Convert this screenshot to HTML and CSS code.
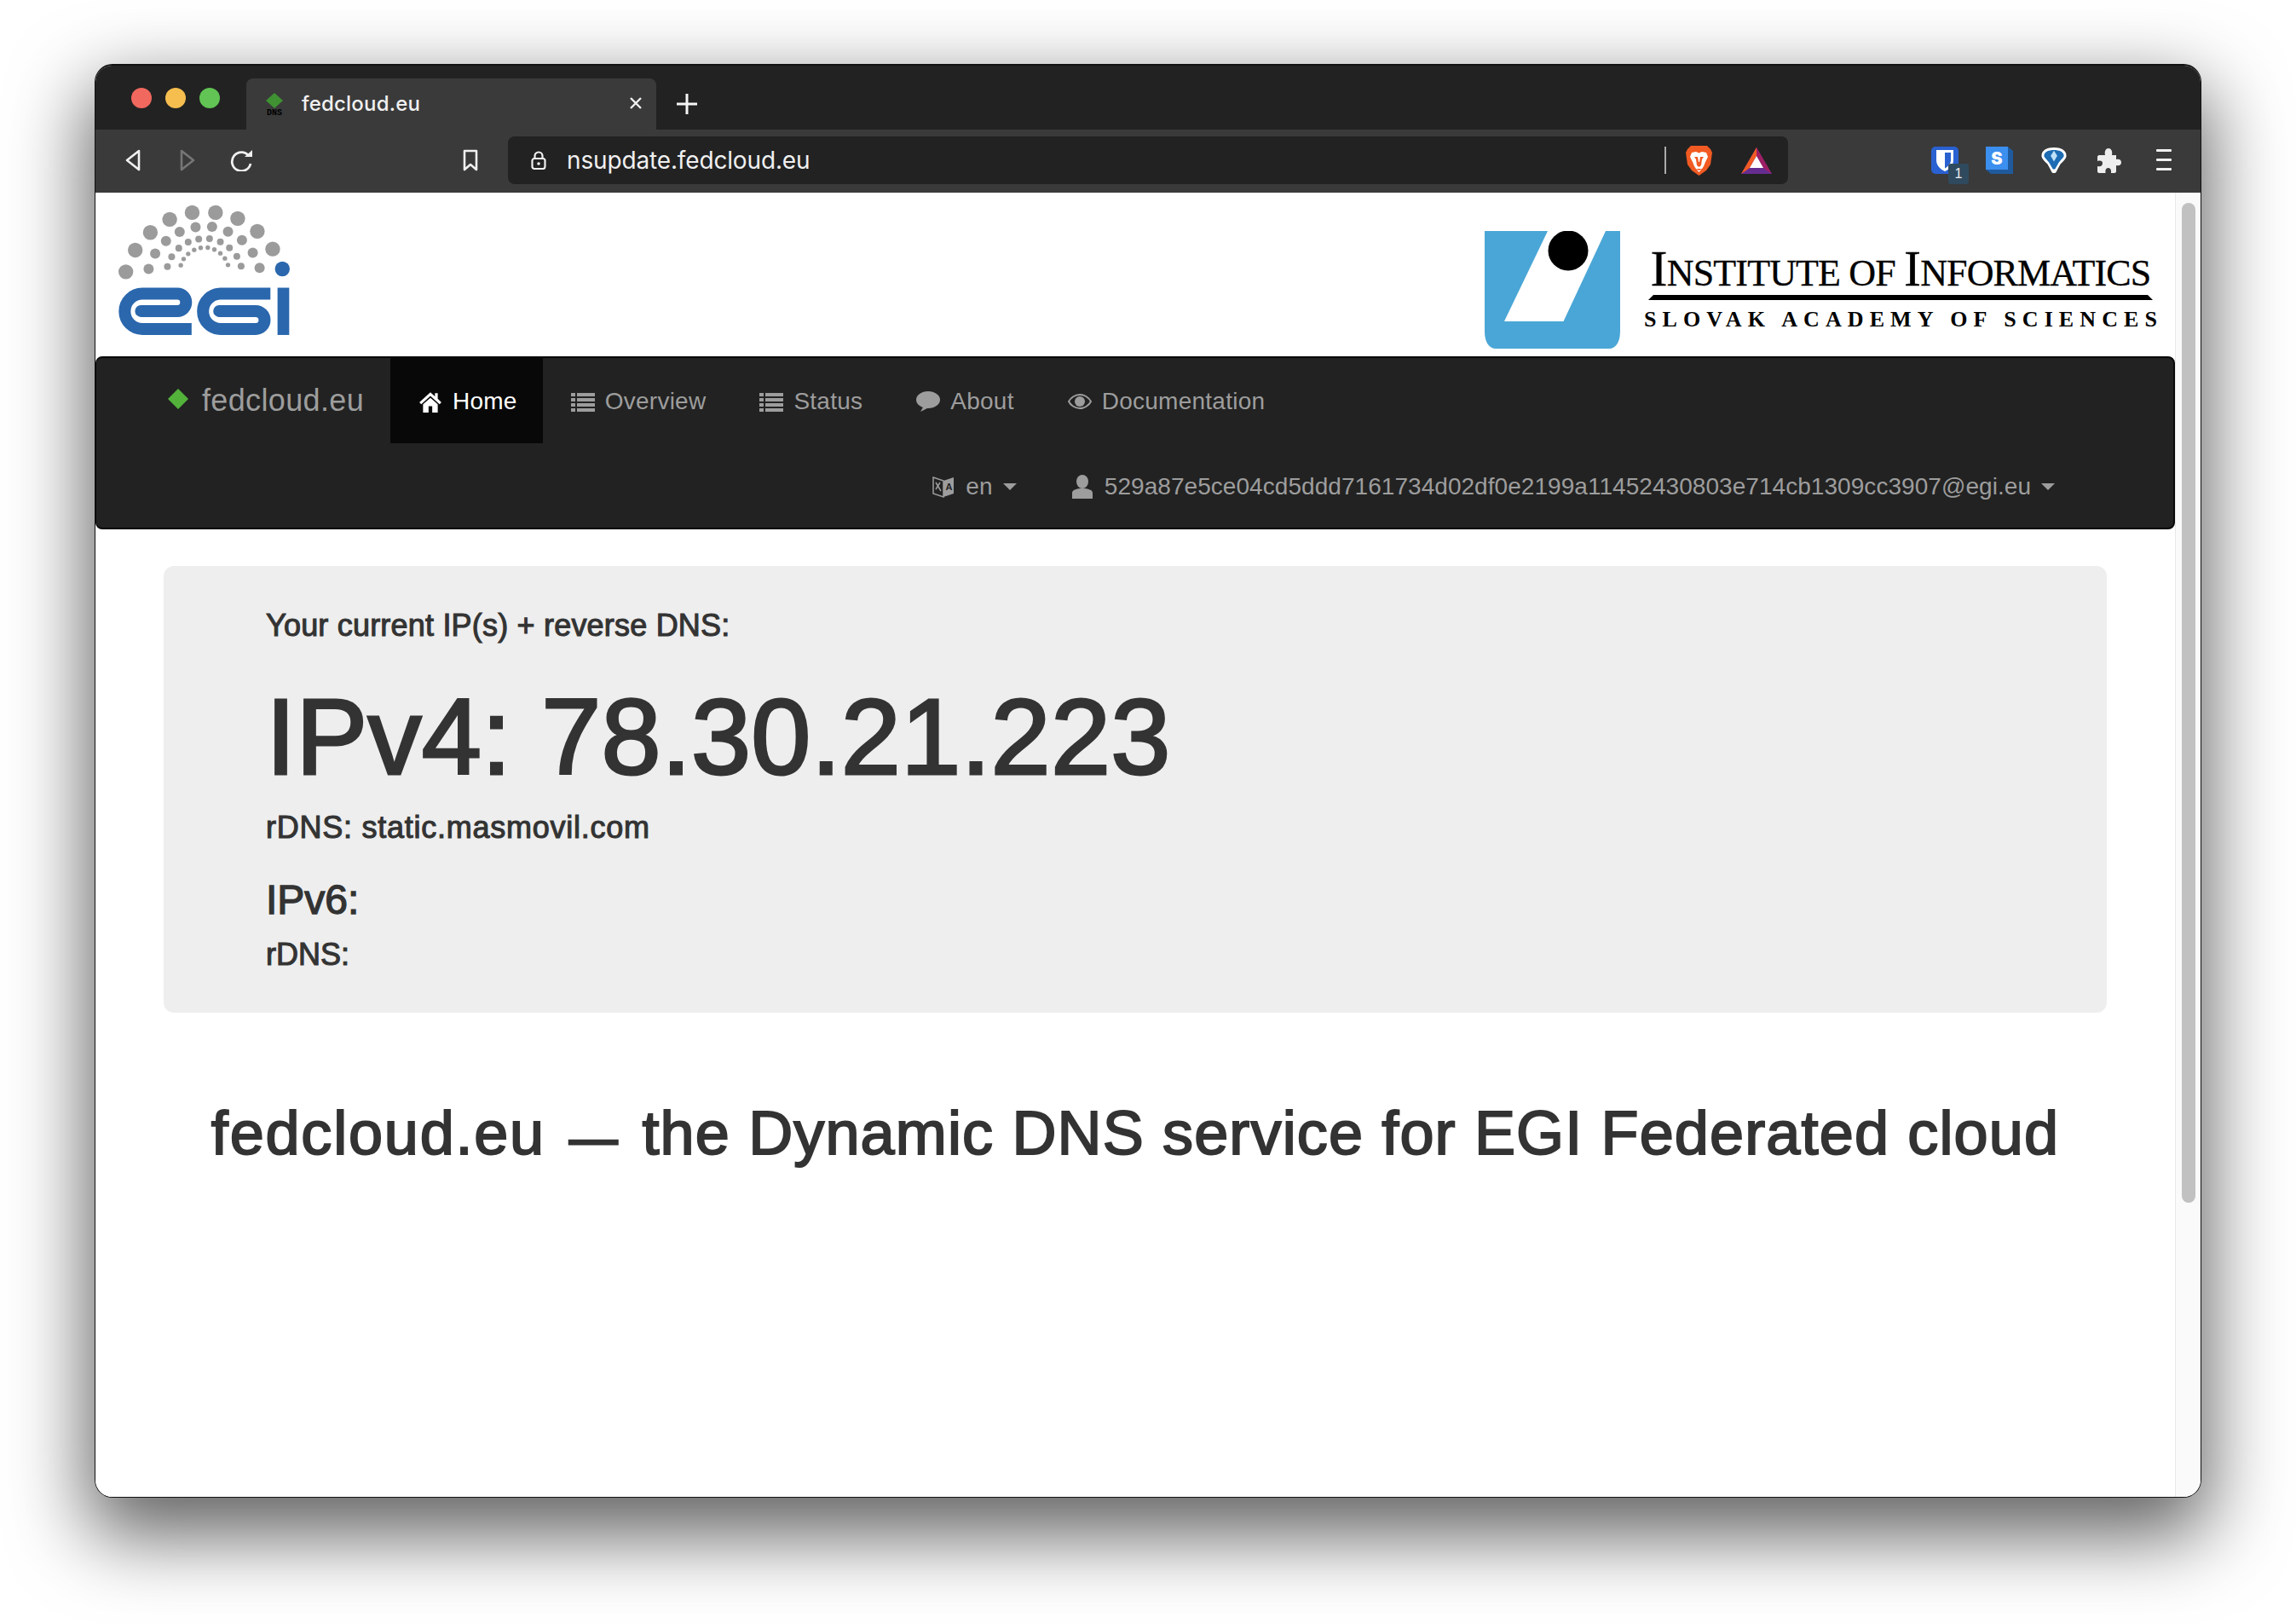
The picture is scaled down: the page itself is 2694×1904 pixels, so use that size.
FILE: index.html
```html
<!DOCTYPE html>
<html lang="en">
<head>
<meta charset="utf-8">
<title>fedcloud.eu</title>
<link rel="stylesheet" href="styles.css">
</head>
<body>
<div class="window">
  <div class="tabstrip">
    <div class="dots"><span class="dot red"></span><span class="dot yellow"></span><span class="dot green"></span></div>
    <div class="tab">
      <div class="favicon">
        <svg class="fav-diamond" viewBox="0 0 20 18"><path d="M10 0 20 9 10 18 0 9Z" fill="#3f9132"/></svg>
        <span class="fav-text">DNS</span>
      </div>
      <span class="tab-title">fedcloud.eu</span>
      <svg class="tab-close" viewBox="0 0 14 14"><path d="M1 1 13 13M13 1 1 13" stroke="#f0f0f0" stroke-width="2.4" fill="none"/></svg>
    </div>
    <svg class="new-tab" viewBox="0 0 24 24"><path d="M12 0V24M0 12H24" stroke="#f5f5f5" stroke-width="3" fill="none"/></svg>
  </div>
  <div class="toolbar">
    <svg class="tb-icon back" viewBox="0 0 20 26"><path d="M17 2 3 13 17 24Z" fill="none" stroke="#f0f0f0" stroke-width="2.6" stroke-linejoin="round"/></svg>
    <svg class="tb-icon forward" viewBox="0 0 20 26"><path d="M3 2 17 13 3 24Z" fill="none" stroke="#767676" stroke-width="2.6" stroke-linejoin="round"/></svg>
    <svg class="tb-icon reload" viewBox="0 0 28 26"><path d="M22 8A11 11 0 1 0 24 17" fill="none" stroke="#f0f0f0" stroke-width="2.8"/><path d="M17 9H26V1Z" fill="#f0f0f0"/></svg>
    <svg class="tb-icon bookmark" viewBox="0 0 20 26"><path d="M3 2H17V24L10 18 3 24Z" fill="none" stroke="#f0f0f0" stroke-width="2.6" stroke-linejoin="round"/></svg>
    <div class="omnibox">
      <svg class="lock" viewBox="0 0 18 22"><path d="M4.500 9V6A4.500 4.500 0 0 1 13.500 6V9" fill="none" stroke="#f0f0f0" stroke-width="2.200"/><rect x="1.500" y="9" width="15" height="12" rx="2.500" fill="none" stroke="#f0f0f0" stroke-width="2.200"/><circle cx="9" cy="15" r="1.800" fill="#f0f0f0"/></svg>
      <span class="url">nsupdate.fedcloud.eu</span>
      <span class="omni-sep"></span>
      <svg class="lion" viewBox="0 0 31 36"><path d="M6 1H25L29 5 31 9 29 23 24 30 15.500 36 7 30 2 23 0 9 2 5Z" fill="#f15a22"/><path d="M7 9 12 8 15.500 9.500 19 8 24 9 26 14 23 20 21 25 19 28H12L10 25 8 20 5 14Z" fill="#fff"/><path d="M10 14H14L15 20H16L17 14H21L19 17 18 24 15.500 26 13 24 12 17Z" fill="#f15a22"/><path d="M12 28 15.500 30 19 28 15.500 32Z" fill="#fff"/></svg>
      <svg class="bat" viewBox="0 0 36 31"><path d="M18 0 36 31H0Z" fill="#662d91"/><path d="M18 0 36 31 26 24 18 10Z" fill="#9e1f63"/><path d="M18 0V10L10 24 0 31Z" fill="#f15a22"/><path d="M18 10 26 24H10Z" fill="#fff"/></svg>
    </div>
    <div class="ext bitwarden">
      <svg viewBox="0 0 32 32"><rect width="32" height="32" rx="5" fill="#2a61d1"/><path d="M6 4H26V16C26 22 21 27 16 29 11 27 6 22 6 16Z" fill="#fff"/><path d="M16 7H23V16C23 20 19 24 16 25.500Z" fill="#2a61d1"/></svg>
      <span class="ext-badge">1</span>
    </div>
    <svg class="ext ext-s" viewBox="0 0 32 32"><path d="M0 0H26L32 5V32H6L0 27Z" fill="#1f5a9c"/><rect width="26" height="27" fill="#3b8fef"/><text x="13" y="21" class="s-letter">S</text></svg>
    <svg class="ext" viewBox="0 0 32 33"><path d="M16 1C8 1 1 4 1 11 1 14 4 17 8 21L12 28C13 31 14 32 16 32 18 32 19 31 20 28L24 21C28 17 31 14 31 11 31 4 24 1 16 1Z" fill="#fff"/><path d="M16 4C10 4 4 6 4 11 4 13 7 15 10 19L14 26C15 28 17 28 18 26L22 19C25 15 28 13 28 11 28 6 22 4 16 4Z" fill="#1e6cb4"/><path d="M16 5 12 11 16 18 20 11Z" fill="#bfe1f7"/></svg>
    <svg class="ext puzzle" viewBox="0 0 28 29"><path d="M2 8H9C8 3 10 0 13 0 16 0 18 3 17 8H22V13C26 12 28 14 28 16.500 28 19 26 21 22 20V27C22 28 21 29 20 29H16C16.500 25 15 23 12.500 23 10 23 9 25 9.500 29H2C1 29 0 28 0 27V21C4 22 6 20 6 17.500 6 15 4 14 0 15V10C0 9 1 8 2 8Z" fill="#eee"/></svg>
    <div class="hamburger"><i></i><i></i><i></i></div>
  </div>
  <div class="viewport">
    <div class="page">
      <header class="logos">
        <svg class="egi" viewBox="80 40 620 470">
          <g fill="#9b9b9b">
            <circle cx="112" cy="282" r="26"/><circle cx="145" cy="206" r="26"/><circle cx="198" cy="144" r="26"/><circle cx="266" cy="98" r="26"/><circle cx="345" cy="74" r="26"/><circle cx="427" cy="74" r="26"/><circle cx="505" cy="95" r="26"/><circle cx="574" cy="140" r="26"/><circle cx="628" cy="202" r="26"/>
            <circle cx="192" cy="272" r="18"/><circle cx="215" cy="218" r="18"/><circle cx="253" cy="174" r="18"/><circle cx="301" cy="142" r="18"/><circle cx="357" cy="125" r="18"/><circle cx="415" cy="124" r="18"/><circle cx="471" cy="141" r="18"/><circle cx="520" cy="171" r="18"/><circle cx="558" cy="215" r="18"/><circle cx="582" cy="268" r="18"/>
            <circle cx="258" cy="264" r="12"/><circle cx="273" cy="229" r="12"/><circle cx="298" cy="199" r="12"/><circle cx="331" cy="178" r="12"/><circle cx="368" cy="167" r="12"/><circle cx="406" cy="166" r="12"/><circle cx="444" cy="177" r="12"/><circle cx="476" cy="198" r="12"/><circle cx="502" cy="228" r="12"/><circle cx="517" cy="262" r="12"/>
            <circle cx="305" cy="259" r="8"/><circle cx="315" cy="237" r="8"/><circle cx="331" cy="219" r="8"/><circle cx="352" cy="205" r="8"/><circle cx="375" cy="198" r="8"/><circle cx="400" cy="197" r="8"/><circle cx="423" cy="204" r="8"/><circle cx="444" cy="217" r="8"/><circle cx="460" cy="235" r="8"/><circle cx="471" cy="258" r="8"/>
          </g>
          <circle cx="662" cy="272" r="26" fill="#2a67ad"/>
          <g fill="none" stroke="#2a67ad" stroke-width="42">
            <path d="M343 483H170A62 62 0 0 1 170 359H293A30.500 30.500 0 0 1 293 420H165"/>
            <path d="M620 359H445A62 62 0 0 0 445 483H568A30.500 30.500 0 0 0 568 420H440"/>
          </g>
          <circle cx="165" cy="420" r="21" fill="#2a67ad"/>
          <circle cx="440" cy="420" r="21" fill="#2a67ad"/>
          <rect x="645" y="338" width="41" height="166" fill="#2a67ad"/>
        </svg>
        <div class="ii">
          <svg class="ii-mark" viewBox="0 0 159 138"><path d="M0 0H159V118C159 130 154 138 146 138H13C5 138 0 130 0 118Z" fill="#4aa6d6"/><path d="M74 0H142L92.500 106H23Z" fill="#fff"/><circle cx="98" cy="23" r="23.500" fill="#000"/></svg>
          <div class="ii-text">
            <div class="ii-name"><span class="ii-big">I</span>NSTITUTE OF <span class="ii-big">I</span>NFORMATICS</div>
            <div class="ii-rule"></div>
            <div class="ii-sub">SLOVAK ACADEMY OF SCIENCES</div>
          </div>
        </div>
      </header>
      <nav class="navbar">
        <div class="nav-row">
          <a class="brand"><svg class="brand-icon" viewBox="0 0 24 24"><path d="M12 0 24 12 12 24 0 12Z" fill="#52b23a"/></svg>fedcloud.eu</a>
          <a class="nav-item active"><svg class="gi" viewBox="0 0 26 26"><path d="M13 3 1 14 3 16 13 7 23 16 25 14 21 10V4H18V7.500Z" fill="currentColor"/><path d="M13 9 5 16V25H11V18H15V25H21V16Z" fill="currentColor"/></svg>Home</a>
          <a class="nav-item"><svg class="gi" viewBox="0 0 28 24"><path d="M0 2H5V6H0ZM7 2H28V6H7ZM0 8H5V12H0ZM7 8H28V12H7ZM0 14H5V18H0ZM7 14H28V18H7ZM0 20H5V24H0ZM7 20H28V24H7Z" fill="currentColor"/></svg>Overview</a>
          <a class="nav-item"><svg class="gi" viewBox="0 0 28 24"><path d="M0 2H5V6H0ZM7 2H28V6H7ZM0 8H5V12H0ZM7 8H28V12H7ZM0 14H5V18H0ZM7 14H28V18H7ZM0 20H5V24H0ZM7 20H28V24H7Z" fill="currentColor"/></svg>Status</a>
          <a class="nav-item"><svg class="gi" viewBox="0 0 28 24"><ellipse cx="14" cy="10" rx="14" ry="10" fill="currentColor"/><path d="M9 17 5 24 15 19Z" fill="currentColor"/></svg>About</a>
          <a class="nav-item"><svg class="gi" viewBox="0 0 28 24"><path d="M14 4C8 4 3 8 1 12 3 16 8 20 14 20 20 20 25 16 27 12 25 8 20 4 14 4Z" fill="none" stroke="currentColor" stroke-width="2"/><circle cx="14" cy="12" r="6" fill="currentColor"/></svg>Documentation</a>
        </div>
        <div class="nav-row nav-right">
          <a class="nav-item"><svg class="gi lang" viewBox="0 0 26 28"><path d="M1 3 13 7V26L1 22Z" fill="none" stroke="currentColor" stroke-width="1.500"/><path d="M13 7 25 3V22L13 26Z" fill="currentColor"/><path d="M4 9 10 19M9 9 4 17" stroke="currentColor" stroke-width="1.500" fill="none"/><text x="15.500" y="18" class="lang-a">A</text></svg>en<span class="caret"></span></a>
          <a class="nav-item nav-user"><svg class="gi" viewBox="0 0 24 28"><ellipse cx="12" cy="8" rx="7" ry="8" fill="currentColor"/><path d="M0 28V21C0 18 5 16 12 16 19 16 24 18 24 21V28Z" fill="currentColor"/></svg>529a87e5ce04cd5ddd7161734d02df0e2199a11452430803e714cb1309cc3907@egi.eu<span class="caret"></span></a>
        </div>
      </nav>
      <main class="content">
        <section class="jumbotron">
          <h4 class="jt-label">Your current IP(s) + reverse DNS:</h4>
          <h1 class="jt-ip">IPv4: 78.30.21.223</h1>
          <h4 class="jt-rdns">rDNS: static.masmovil.com</h4>
          <h3 class="jt-ip6">IPv6:</h3>
          <h4 class="jt-rdns6">rDNS:</h4>
        </section>
        <h1 class="tagline"><span class="tg-brand">fedcloud.eu</span> <span class="dash">—</span> the Dynamic DNS service for EGI Federated cloud</h1>
      </main>
    </div>
    <div class="scrollbar"><div class="thumb"></div></div>
  </div>
</div>
</body>
</html>
```
FILE: styles.css
```css
* { box-sizing: border-box; }
html, body { margin: 0; height: 100%; }
body {
  background: #fff;
  padding: 75px 111px 147px;
  font-family: "Liberation Sans", Arial, sans-serif;
  color: #333;
  overflow: hidden;
}
.window {
  width: 2472px;
  height: 1682px;
  display: flex;
  flex-direction: column;
  border: 1px solid #111;
  border-top: 2px solid #111;
  border-radius: 21px;
  overflow: hidden;
  background: #fff;
  box-shadow: 0 36px 90px 8px rgba(0, 0, 0, .62);
}
.tabstrip {
  height: 75px;
  flex: none;
  background: #222;
  display: flex;
  align-items: flex-start;
}
.dots { display: flex; gap: 16px; padding: 26px 0 0 42px; width: 177px; }
.dot { width: 24px; height: 24px; border-radius: 50%; }
.red { background: #f1685e; }
.yellow { background: #f6be4f; }
.green { background: #61c454; }
.tab {
  width: 481px;
  height: 60px;
  margin-top: 15px;
  background: #3a3a3a;
  border-radius: 8px 8px 0 0;
  display: flex;
  align-items: center;
  padding: 0 17px 0 21px;
}
.favicon { width: 24px; height: 32px; margin-top: 6px; display: flex; flex-direction: column; align-items: center; flex: none; }
.fav-diamond { width: 20px; height: 18px; display: block; flex: none; }
.fav-text { font: bold 10px/12px "Liberation Mono", monospace; color: #000; }
.tab-title { font: 500 24px "Inter", "Liberation Sans", sans-serif; color: #f0f0f0; margin-left: 20px; letter-spacing: .2px; flex: 1; padding-bottom: 2px; }
.tab-close { width: 14px; height: 14px; margin-bottom: 2px; }
.new-tab { width: 24px; height: 24px; margin: 33px 0 0 24px; }
.toolbar {
  height: 74px;
  flex: none;
  background: #3a3a3a;
  display: flex;
  align-items: center;
  padding: 0 0 2px 34px;
}
.tb-icon { height: 26px; flex: none; }
.back { width: 20px; }
.forward { width: 20px; margin-left: 44px; }
.reload { width: 28px; margin-left: 40px; }
.bookmark { width: 20px; margin-left: 244px; }
.omnibox {
  width: 1502px;
  height: 56px;
  margin-left: 34px;
  background: #222;
  border-radius: 8px;
  display: flex;
  align-items: center;
  padding-left: 27px;
}
.lock { width: 18px; height: 22px; flex: none; }
.url { font: 400 28px "Inter", "Liberation Sans", sans-serif; color: #f0f0f0; margin-left: 24px; letter-spacing: -.15px; width: 1288px; flex: none; }
.omni-sep { width: 2px; height: 32px; background: #aaa; flex: none; }
.lion { width: 31px; height: 36px; margin-left: 23px; flex: none; }
.bat { width: 36px; height: 31px; margin-left: 34px; flex: none; }
.ext { width: 32px; height: 32px; flex: none; display: block; }
.bitwarden { position: relative; margin-left: 168px; }
.bitwarden svg { width: 32px; height: 32px; display: block; }
.ext-badge {
  position: absolute; left: 20px; top: 20px;
  width: 24px; height: 24px; border-radius: 3px;
  background: #2f4a5e; color: #eee;
  font: 16px/24px "Liberation Sans", sans-serif; text-align: center;
}
.ext-s { margin-left: 32px; }
.s-letter { font: 900 20px "Inter", "Liberation Sans", sans-serif; fill: #fff; text-anchor: middle; }
.ext-s + .ext { margin-left: 32px; }
.puzzle { width: 28px; height: 29px; margin-left: 35px; }
.hamburger { width: 18px; margin: 0 0 2px 41px; display: flex; flex-direction: column; gap: 8px; flex: none; }
.hamburger i { display: block; height: 3px; background: #f0f0f0; border-radius: 1px; }
.viewport { flex: 1; min-height: 0; display: flex; }
.page { flex: 1; min-width: 0; background: #fff; }
.scrollbar {
  width: 30px;
  flex: none;
  background: #fafafa;
  border-left: 1px solid #e8e8e8;
  padding: 12px 6px 0 7px;
}
.thumb { height: 1173px; background: #c1c1c1; border-radius: 8px; }
.logos {
  height: 192px;
  display: flex;
  justify-content: space-between;
  padding: 12px 19px 0 25px;
}
.egi { width: 207px; height: 157px; flex: none; }
.ii { display: flex; gap: 26px; padding-top: 33px; align-items: flex-start; }
.ii-mark { width: 159px; height: 138px; flex: none; }
.ii-text { width: 606px; display: flex; flex-direction: column; align-items: center; padding-top: 19px; }
.ii-name { font: 44px/50px "Liberation Serif", "Times New Roman", serif; color: #000; white-space: nowrap; letter-spacing: -.85px; -webkit-text-stroke: .3px #000; }
.ii-big { font-size: 60px; line-height: 50px; }
.ii-rule {
  width: 592px; height: 6px; margin-top: 0; background: #000;
  clip-path: polygon(6px 0, calc(100% - 6px) 0, 100% 100%, 0 100%);
}
.ii-sub { font: bold 26px/30px "Liberation Serif", "Times New Roman", serif; color: #000; letter-spacing: 7.100px; white-space: nowrap; margin: 8px 0 0 7px; }
.navbar {
  height: 203px;
  background: #222;
  border: 2px solid #080808;
  border-left-width: 1px;
  border-radius: 8px;
  color: #9d9d9d;
}
.nav-row { display: flex; height: 100px; padding-left: 84px; }
.nav-right { justify-content: flex-end; padding: 0 109px 0 0; }
.brand { display: flex; align-items: center; width: 261px; font-size: 36px; letter-spacing: .35px; }
.brand-icon { width: 24px; height: 24px; margin-right: 16px; flex: none; margin-bottom: 4px; }
.nav-item {
  display: flex;
  align-items: center;
  height: 100px;
  padding: 2px 30px 0;
  font-size: 28px;
  white-space: nowrap;
  letter-spacing: .25px;
}
.nav-user { letter-spacing: .05px; }
.nav-item.active { background: #080808; color: #fff; }
.gi { width: 28px; height: 28px; margin: 0 12px 0 3px; flex: none; }
.caret {
  display: inline-block;
  width: 0; height: 0;
  margin-left: 12px;
  border-top: 8px solid currentColor;
  border-left: 8px solid transparent;
  border-right: 8px solid transparent;
}
.lang-a { font: bold 11px "Liberation Sans", sans-serif; fill: #222; }
.content { padding: 43px 80px 0 80px; }
.jumbotron {
  height: 524px;
  background: #eee;
  border-radius: 12px;
  padding: 0 120px;
  overflow: hidden;
}
h1, h3, h4 { margin: 0; font-weight: 500; -webkit-text-stroke: 1.100px #333; }
.jt-label { font-size: 36px; line-height: 40px; margin-top: 50px; letter-spacing: .2px; }
.jt-ip { font-size: 126px; line-height: 140px; margin-top: 41px; letter-spacing: .2px; -webkit-text-stroke: 3px #333; }
.jt-rdns { font-size: 36px; line-height: 40px; margin-top: 16px; letter-spacing: .75px; }
.jt-ip6 { font-size: 48px; line-height: 52px; margin-top: 39px; -webkit-text-stroke: 1.400px #333; }
.jt-rdns6 { font-size: 36px; line-height: 40px; margin-top: 18px; }
.tagline { font-size: 72px; line-height: 80px; margin-top: 101px; text-align: center; -webkit-text-stroke: 2px #333; white-space: nowrap; letter-spacing: 1.150px; }
.tg-brand { letter-spacing: 1.800px; }
.dash { font-size: 56px; margin: 0 7px; -webkit-text-stroke: 3px #333; }
```
